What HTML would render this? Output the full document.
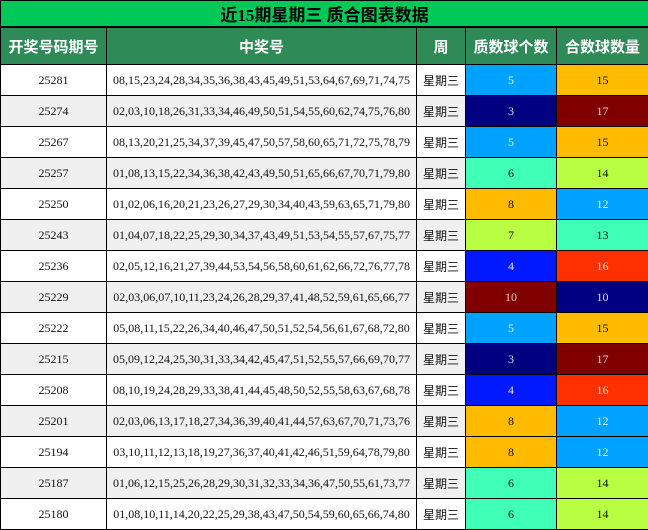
<!DOCTYPE html>
<html lang="zh">
<head>
<meta charset="utf-8">
<title>近15期星期三 质合图表数据</title>
<style>
html,body{margin:0;padding:0;background:#fff;width:648px;height:530px;overflow:hidden}
table{border-collapse:collapse;table-layout:fixed;width:648px;position:absolute;left:0;top:0;font-family:"Liberation Serif","Noto Sans CJK SC",serif;font-size:12px;color:#111}
td,th{border:1px solid #000;padding:0;text-align:center;overflow:hidden;white-space:nowrap;box-sizing:border-box}
.t{background:#00c957;font-size:17px;font-weight:bold;color:#000}
tr.t th{height:26px;border-top:1px solid #000;border-bottom:2px solid #000}
tr.h th{background:#2e8b57;color:#fff;font-size:15px;font-weight:bold;height:37px;padding-top:2px}
tr.r td{height:31px;background:#fff;padding-top:2px}
tr.r.g td{background:#f0f0f0}
tr.r td.a,tr.r.g td.a{background:#00a2ff;color:rgba(255,255,255,.85)}
tr.r td.b,tr.r.g td.b{background:#ffbb00}
tr.r td.c,tr.r.g td.c{background:#000080;color:rgba(255,255,255,.85)}
tr.r td.d,tr.r.g td.d{background:#800000;color:rgba(255,255,255,.8)}
tr.r td.e,tr.r.g td.e{background:#40ffb7}
tr.r td.f,tr.r.g td.f{background:#b7ff40}
tr.r td.k,tr.r.g td.k{background:#0019ff;color:rgba(255,255,255,.85)}
tr.r td.m,tr.r.g td.m{background:#ff3000;color:rgba(255,255,255,.85)}
</style>
</head>
<body>
<table>
<colgroup><col style="width:106px"><col style="width:310px"><col style="width:49px"><col style="width:91px"><col style="width:92px"></colgroup>
<tr class="t"><th colspan="5" class="t">近15期星期三 质合图表数据</th></tr>
<tr class="h"><th>开奖号码期号</th><th>中奖号</th><th>周</th><th>质数球个数</th><th>合数球数量</th></tr>
<tr class="r"><td>25281</td><td>08,15,23,24,28,34,35,36,38,43,45,49,51,53,64,67,69,71,74,75</td><td>星期三</td><td class="a">5</td><td class="b">15</td></tr>
<tr class="r g"><td>25274</td><td>02,03,10,18,26,31,33,34,46,49,50,51,54,55,60,62,74,75,76,80</td><td>星期三</td><td class="c">3</td><td class="d">17</td></tr>
<tr class="r"><td>25267</td><td>08,13,20,21,25,34,37,39,45,47,50,57,58,60,65,71,72,75,78,79</td><td>星期三</td><td class="a">5</td><td class="b">15</td></tr>
<tr class="r g"><td>25257</td><td>01,08,13,15,22,34,36,38,42,43,49,50,51,65,66,67,70,71,79,80</td><td>星期三</td><td class="e">6</td><td class="f">14</td></tr>
<tr class="r"><td>25250</td><td>01,02,06,16,20,21,23,26,27,29,30,34,40,43,59,63,65,71,79,80</td><td>星期三</td><td class="b">8</td><td class="a">12</td></tr>
<tr class="r g"><td>25243</td><td>01,04,07,18,22,25,29,30,34,37,43,49,51,53,54,55,57,67,75,77</td><td>星期三</td><td class="f">7</td><td class="e">13</td></tr>
<tr class="r"><td>25236</td><td>02,05,12,16,21,27,39,44,53,54,56,58,60,61,62,66,72,76,77,78</td><td>星期三</td><td class="k">4</td><td class="m">16</td></tr>
<tr class="r g"><td>25229</td><td>02,03,06,07,10,11,23,24,26,28,29,37,41,48,52,59,61,65,66,77</td><td>星期三</td><td class="d">10</td><td class="c">10</td></tr>
<tr class="r"><td>25222</td><td>05,08,11,15,22,26,34,40,46,47,50,51,52,54,56,61,67,68,72,80</td><td>星期三</td><td class="a">5</td><td class="b">15</td></tr>
<tr class="r g"><td>25215</td><td>05,09,12,24,25,30,31,33,34,42,45,47,51,52,55,57,66,69,70,77</td><td>星期三</td><td class="c">3</td><td class="d">17</td></tr>
<tr class="r"><td>25208</td><td>08,10,19,24,28,29,33,38,41,44,45,48,50,52,55,58,63,67,68,78</td><td>星期三</td><td class="k">4</td><td class="m">16</td></tr>
<tr class="r g"><td>25201</td><td>02,03,06,13,17,18,27,34,36,39,40,41,44,57,63,67,70,71,73,76</td><td>星期三</td><td class="b">8</td><td class="a">12</td></tr>
<tr class="r"><td>25194</td><td>03,10,11,12,13,18,19,27,36,37,40,41,42,46,51,59,64,78,79,80</td><td>星期三</td><td class="b">8</td><td class="a">12</td></tr>
<tr class="r g"><td>25187</td><td>01,06,12,15,25,26,28,29,30,31,32,33,34,36,47,50,55,61,73,77</td><td>星期三</td><td class="e">6</td><td class="f">14</td></tr>
<tr class="r"><td>25180</td><td>01,08,10,11,14,20,22,25,29,38,43,47,50,54,59,60,65,66,74,80</td><td>星期三</td><td class="e">6</td><td class="f">14</td></tr>
</table>
</body>
</html>
